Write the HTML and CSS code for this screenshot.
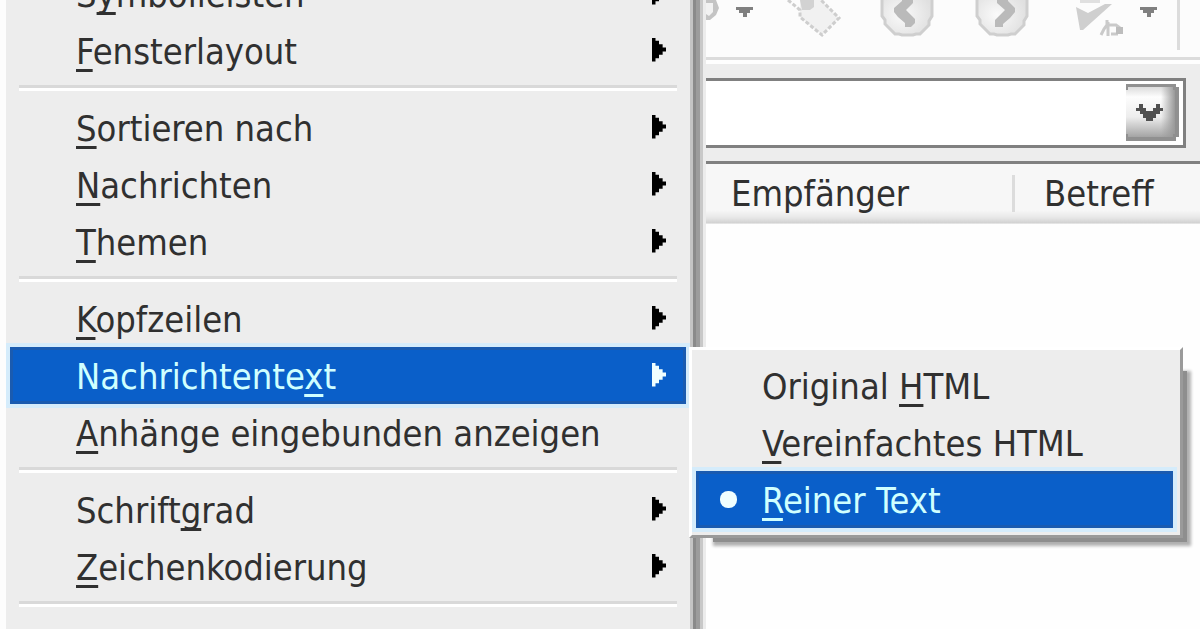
FILE: index.html
```html
<!DOCTYPE html>
<html lang="de">
<head>
    <meta charset="UTF-8">
    <meta name="viewport" content="width=device-width, initial-scale=1.0">
    <title>Nachrichtentext</title>
    <link rel="stylesheet" href="styles.css">
</head>
<body>
    <main class="window">
        <div class="toolbar">
            <div class="tools">
                <button class="tool" type="button" aria-label="Adressbuch">
                    <svg width="54" height="40" viewBox="0 0 54 40">
                        <path d="M22 0h8v12l-8 4z" fill="#aaa"/>
                        <path d="M32 0h18l3 8-3 7-6 5h-6l-6-5z" fill="#c4c4c4"/>
                        <path d="M37 3h10v9l-4 4-6-4z" fill="#f2f2f2"/>
                    </svg>
                </button>
                <button class="tool" type="button" aria-label="Adressbuch Auswahl">
                    <svg width="17" height="40" viewBox="0 0 17 40">
                        <path d="M0 7h17v3h-3v3h-3v4H7v-4H3v-3H0z" fill="#808080"/>
                    </svg>
                </button>
            </div>
            <button class="tool" type="button" aria-label="Schlagwort">
                <svg class="tag" width="45" height="40" viewBox="0 0 45 40">
                    <path d="M6 0v17l22 18 17-17L27 0z" fill="#f1f1f1"/>
                    <path d="M-6 0L6 10v7l22 18 17-17L27 0" fill="none" stroke="#cecece" stroke-width="3" stroke-dasharray="4 2"/>
                    <path d="M6 0h14v7l-4 3H8z" fill="#d2d2d2"/>
                </svg>
            </button>
            <button class="tool" type="button" aria-label="Zurück">
                <svg width="54" height="40" viewBox="0 0 54 40">
                    <defs>
                        <radialGradient id="ball" cx="0.4" cy="0.55" r="0.6">
                            <stop offset="0" stop-color="#fafafa"/>
                            <stop offset="1" stop-color="#e0e0e0"/>
                        </radialGradient>
                    </defs>
                    <path d="M2-10v26l3 4v4l10 10h4l3 1h11l3-1h4l9-9v-4l3-5v-26z" fill="url(#ball)" stroke="#cfcfcf" stroke-width="3"/>
                    <path d="M22-4h11v7l-7 7 9 9v4l-4 4h-6v-4l-7-6-4-5V8l8-7z" fill="#bababa"/>
                </svg>
            </button>
            <button class="tool" type="button" aria-label="Vor">
                <svg width="54" height="40" viewBox="0 0 54 40">
                    <path d="M2-10v26l3 4v4l10 10h4l3 1h11l3-1h4l9-9v-4l3-5v-26z" fill="url(#ball)" stroke="#cfcfcf" stroke-width="3"/>
                    <path d="M33-4H22v7l8 7-10 10v7h8v-3l7-6 5-6V8l-7-7z" fill="#bababa"/>
                </svg>
            </button>
            <div class="tools">
                <button class="tool" type="button" aria-label="Rechtschreibung">
                    <svg width="54" height="40" viewBox="0 0 54 40">
                        <path d="M10 0h20v3H10z" fill="#e0e0e0"/>
                        <path d="M6 7l12 6 17-9h7L13 30h-3z" fill="#cfcfcf"/>
                        <path d="M31 35l3-6 3-4v-5M38 22v14M38 25h8l4 3M41 34h7" fill="none" stroke="#cacaca" stroke-width="3"/>
                        <path d="M46 27h7v7h-7z" fill="#bdbdbd"/>
                    </svg>
                </button>
                <button class="tool" type="button" aria-label="Rechtschreibung Auswahl">
                    <svg width="17" height="40" viewBox="0 0 17 40">
                        <path d="M0 7h17v3h-3v3h-3v4H7v-4H3v-3H0z" fill="#808080"/>
                    </svg>
                </button>
            </div>
            <span class="divider"></span>
        </div>

        <div class="filter">
            <div class="combo">
                <select class="combo-box" aria-label="Ansicht">
                    <option></option>
                </select>
                <svg class="combo-arrow" width="53" height="57" viewBox="0 0 53 57">
                    <defs>
                        <linearGradient id="face" x1="0" y1="0" x2="0" y2="1">
                            <stop offset="0" stop-color="#dcdcdc"/>
                            <stop offset="0.2" stop-color="#fdfdfd"/>
                            <stop offset="0.6" stop-color="#ededed"/>
                            <stop offset="1" stop-color="#a4a4a4"/>
                        </linearGradient>
                        <linearGradient id="edge" x1="0" y1="0" x2="1" y2="0">
                            <stop offset="0.7" stop-color="#999" stop-opacity="0"/>
                            <stop offset="1" stop-color="#999"/>
                        </linearGradient>
                    </defs>
                    <path d="M0 0h50v3h3v50h-3v4H0z" fill="#909090"/>
                    <path d="M0 6h2V3h45v3h2v44h-2v3H2v-3H0z" fill="url(#face)"/>
                    <path d="M2 3h45v3h2v44h-2v3H2z" fill="url(#edge)"/>
                    <path d="M10 24h3v-4h4v4h3v3h7v-3h3v-4h4v4h3v3h-3v3h-4v4h-3v3h-7v-3h-3v-4h-3v-3h-4z" fill="#505050"/>
                </svg>
            </div>
        </div>

        <table class="list">
            <thead>
                <tr>
                    <th class="col-to">Empfänger</th>
                    <th class="col-subject">Betreff</th>
                </tr>
            </thead>
        </table>
    </main>

    <div class="menu" role="menu">
        <button class="item" type="button" role="menuitem"><span>S<u>y</u>mbolleisten</span><i class="arrow"></i></button>
        <button class="item" type="button" role="menuitem"><span><u>F</u>ensterlayout</span><i class="arrow"></i></button>
        <hr class="line">
        <button class="item" type="button" role="menuitem"><span><u>S</u>ortieren nach</span><i class="arrow"></i></button>
        <button class="item" type="button" role="menuitem"><span><u>N</u>achrichten</span><i class="arrow"></i></button>
        <button class="item" type="button" role="menuitem"><span><u>T</u>hemen</span><i class="arrow"></i></button>
        <hr class="line">
        <button class="item" type="button" role="menuitem"><span><u>K</u>opfzeilen</span><i class="arrow"></i></button>
        <div class="parent">
            <button class="item active" type="button" role="menuitem" aria-expanded="true"><span>Nachrichtente<u>x</u>t</span><i class="arrow"></i></button>
            <div class="submenu" role="menu">
                <button class="item" type="button" role="menuitemradio" aria-checked="false"><span>Original <u>H</u>TML</span></button>
                <button class="item" type="button" role="menuitemradio" aria-checked="false"><span><u>V</u>ereinfachtes HTML</span></button>
                <button class="item active checked" type="button" role="menuitemradio" aria-checked="true"><span><u>R</u>einer Text</span></button>
            </div>
        </div>
        <button class="item" type="button" role="menuitem"><span><u>A</u>nhänge eingebunden anzeigen</span></button>
        <hr class="line">
        <button class="item" type="button" role="menuitem"><span>Schrift<u>g</u>rad</span><i class="arrow"></i></button>
        <button class="item" type="button" role="menuitem"><span><u>Z</u>eichenkodierung</span><i class="arrow"></i></button>
        <hr class="line">
    </div>
</body>
</html>
```
FILE: styles.css
```css
*{
    box-sizing: border-box;
}
body{
    margin: 0;
    height: 100vh;
    overflow: hidden;
    position: relative;
    background: #fefefe;
    color: #303030;
    font-family: "DejaVu Sans Condensed", "DejaVu Sans", sans-serif;
    font-size: 36px;
}
button{
    border: none;
    padding: 0;
    background: none;
    color: inherit;
    font: inherit;
}

/* toolbar */
.toolbar{
    display: flex;
    justify-content: flex-end;
    align-items: flex-start;
    gap: 41px;
    padding: 0 20px 7px 0;
    background: #fcfcfc;
    border-bottom: 3px solid #dcdcdc;
}
.tools{
    display: flex;
    gap: 16px;
}
.tool svg{
    display: block;
}
.tool .tag{
    overflow: visible;
}
.divider{
    width: 3px;
    height: 50px;
    margin-left: -21px;
    background: #dcdcdc;
}

/* drop-down */
.filter{
    padding: 14px 14px 13px 0;
    background: #ededed;
    border-top: 4px solid #fefefe;
}
.combo{
    position: relative;
}
.combo-box{
    display: block;
    width: 100%;
    height: 70px;
    appearance: none;
    border: 3px solid #808080;
    border-radius: 0;
    background: #fff;
    font: inherit;
}
.combo-arrow{
    position: absolute;
    top: 6px;
    right: 7px;
    pointer-events: none;
}

/* message list */
.list{
    width: 100%;
    border-collapse: collapse;
    table-layout: fixed;
    border-top: 3px solid #808080;
    background: linear-gradient(#f7f7f7 78%, #e8e8e8 90%, #cfcfcf);
}
.list th{
    position: relative;
    height: 61px;
    padding: 0 0 0 30px;
    font-weight: normal;
    line-height: 60px;
    text-align: left;
}
.list .col-to{
    width: 1014px;
    padding-left: 731px;
}
.col-to::after{
    content: "";
    position: absolute;
    top: 11px;
    right: -1px;
    width: 3px;
    height: 37px;
    background: #dcdcdc;
}

/* menus */
.menu{
    position: absolute;
    top: -35px;
    bottom: 0;
    left: 0;
    width: 693px;
    padding: 0 4px;
    background: #ededed;
    border-left: 6px solid #fdfdfd;
    border-right: 3px solid #c4c4c4;
    box-shadow: 3px 0 #8a8a8a, 7px 0 #9c9c9c, 10px 0 #c8c8c8, 13px 0 #ececec;
}
.item{
    display: flex;
    align-items: center;
    justify-content: space-between;
    width: 100%;
    height: 57px;
    padding: 0 20px 0 66px;
    line-height: 57px;
    text-align: left;
    white-space: nowrap;
}
.item span{
    padding-top: 2px;
}
.item u{
    text-decoration-thickness: 3px;
    text-underline-offset: 5px;
    text-decoration-skip-ink: none;
}
.arrow{
    width: 14px;
    height: 24px;
    margin-bottom: 2px;
    background: #000;
    clip-path: polygon(0 0, 25% 0, 25% 14%, 50% 14%, 50% 28%, 76% 28%, 76% 42%, 100% 42%, 100% 58%, 76% 58%, 76% 72%, 50% 72%, 50% 86%, 25% 86%, 25% 100%, 0 100%);
}
.active{
    background: #0a5fc9;
    color: #d0ffff;
    box-shadow: inset 0 0 0 3px #1a5bb0, 0 0 0 4px #d5ecfb;
}
.active .arrow{
    background: #f0ffff;
}
.line{
    height: 20px;
    margin: 0 9px;
    border: none;
    background: linear-gradient(#d9d9d9 50%, #fff 50%) 0 6px / 100% 6px no-repeat;
}
.parent{
    position: relative;
}
.submenu{
    position: absolute;
    top: 0;
    left: calc(100% + 3px);
    width: 494px;
    padding: 7px 7px 7px 4px;
    background: #ededed;
    border: 3px solid #fff;
    border-right-color: #9a9a9a;
    border-bottom-color: #9a9a9a;
    box-shadow: 14px 14px 0 -10px #8e8e8e, 16px 16px 3px -8px #b0b0b0;
}
.submenu .active{
    position: relative;
}
.checked::before{
    content: "";
    position: absolute;
    left: 24px;
    width: 17px;
    height: 17px;
    border-radius: 8px;
    background: #f0ffff;
}
```
